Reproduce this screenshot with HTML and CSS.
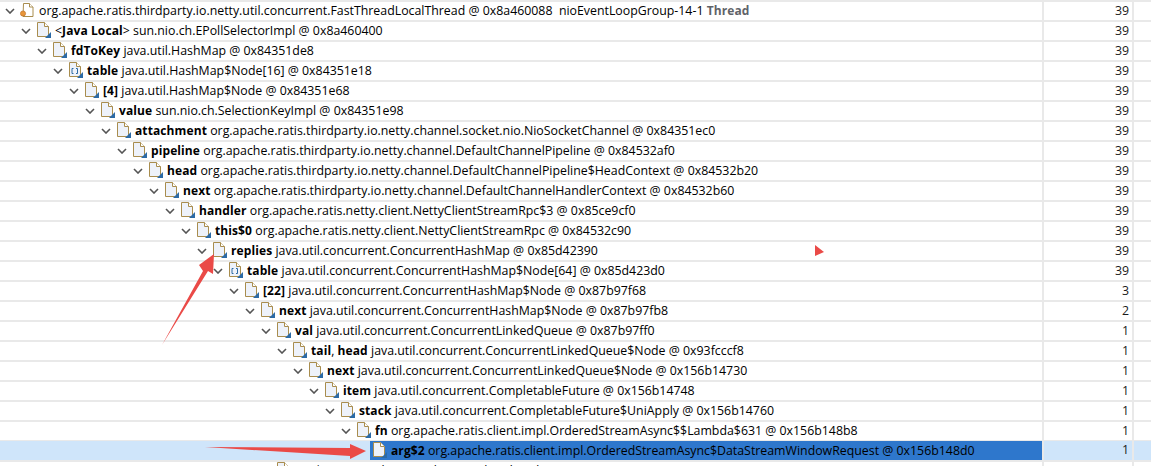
FILE: index.html
```html
<!DOCTYPE html>
<html lang="en">
<head>
<meta charset="utf-8">
<title>Heap object tree</title>
<link rel="stylesheet" href="styles.css">
</head>
<body>
<svg class="defs" width="0" height="0" aria-hidden="true">
  <symbol id="chev" viewBox="0 0 10 6"><path d="M1 1l4 4 4-4" fill="none" stroke="#555" stroke-width="1.6"/></symbol>
  <symbol id="doc" viewBox="0 0 16 16">
    <path d="M1.5 .5h7l4 4v10h-11z" fill="#eef2fa" stroke="#a98d4e"/>
    <path d="M8.500 .5v4h4" fill="#fff" stroke="#a98d4e"/>
    <path d="M15 10v6h-6z" fill="#2c6aa6"/>
  </symbol>
  <symbol id="arr" viewBox="0 0 16 16">
    <path d="M1.500 .5h7l4 4v10h-11z" fill="#eef2fa" stroke="#a98d4e"/>
    <path d="M8.500 .5v4h4" fill="#fff" stroke="#a98d4e"/>
    <path d="M5.500 6.500h-1.500v5h1.500M8 6.500h1.500v5h-1.500" fill="none" stroke="#2c6aa6"/>
    <path d="M15 10v6h-6z" fill="#2c6aa6"/>
  </symbol>
  <symbol id="thr" viewBox="0 0 16 16">
    <path d="M3.500 1.500h6l3.500 3.500v9.500h-10z" fill="#fff" stroke="#a98d4e"/>
    <path d="M9.500 1.500v3.500h3.500" fill="#fff" stroke="#a98d4e"/>
    <circle cx="3" cy="11.500" r="2.600" fill="#e9963a" stroke="#b96a1e" stroke-width=".6"/>
  </symbol>
</svg>
<main class="tree">
  <div class="row"><div class="name"><span class="ind d0"></span><svg class="chev"><use href="#chev"/></svg><svg class="ico"><use href="#thr"/></svg><span class="txt">org.apache.ratis.thirdparty.io.netty.util.concurrent.FastThreadLocalThread @ 0x8a460088 &nbsp;nioEventLoopGroup-14-1 <b class="muted">Thread</b></span></div><div class="num">39</div><div class="tail"></div></div>
  <div class="row"><div class="name"><span class="ind d1"></span><svg class="chev"><use href="#chev"/></svg><svg class="ico"><use href="#doc"/></svg><span class="txt">&lt;<b>Java Local</b>&gt; sun.nio.ch.EPollSelectorImpl @ 0x8a460400</span></div><div class="num">39</div><div class="tail"></div></div>
  <div class="row"><div class="name"><span class="ind d2"></span><svg class="chev"><use href="#chev"/></svg><svg class="ico"><use href="#doc"/></svg><span class="txt"><b>fdToKey</b> java.util.HashMap @ 0x84351de8</span></div><div class="num">39</div><div class="tail"></div></div>
  <div class="row"><div class="name"><span class="ind d3"></span><svg class="chev"><use href="#chev"/></svg><svg class="ico"><use href="#arr"/></svg><span class="txt"><b>table</b> java.util.HashMap$Node[16] @ 0x84351e18</span></div><div class="num">39</div><div class="tail"></div></div>
  <div class="row"><div class="name"><span class="ind d4"></span><svg class="chev"><use href="#chev"/></svg><svg class="ico"><use href="#doc"/></svg><span class="txt"><b>[4]</b> java.util.HashMap$Node @ 0x84351e68</span></div><div class="num">39</div><div class="tail"></div></div>
  <div class="row"><div class="name"><span class="ind d5"></span><svg class="chev"><use href="#chev"/></svg><svg class="ico"><use href="#doc"/></svg><span class="txt"><b>value</b> sun.nio.ch.SelectionKeyImpl @ 0x84351e98</span></div><div class="num">39</div><div class="tail"></div></div>
  <div class="row"><div class="name"><span class="ind d6"></span><svg class="chev"><use href="#chev"/></svg><svg class="ico"><use href="#doc"/></svg><span class="txt"><b>attachment</b> org.apache.ratis.thirdparty.io.netty.channel.socket.nio.NioSocketChannel @ 0x84351ec0</span></div><div class="num">39</div><div class="tail"></div></div>
  <div class="row"><div class="name"><span class="ind d7"></span><svg class="chev"><use href="#chev"/></svg><svg class="ico"><use href="#doc"/></svg><span class="txt"><b>pipeline</b> org.apache.ratis.thirdparty.io.netty.channel.DefaultChannelPipeline @ 0x84532af0</span></div><div class="num">39</div><div class="tail"></div></div>
  <div class="row"><div class="name"><span class="ind d8"></span><svg class="chev"><use href="#chev"/></svg><svg class="ico"><use href="#doc"/></svg><span class="txt"><b>head</b> org.apache.ratis.thirdparty.io.netty.channel.DefaultChannelPipeline$HeadContext @ 0x84532b20</span></div><div class="num">39</div><div class="tail"></div></div>
  <div class="row"><div class="name"><span class="ind d9"></span><svg class="chev"><use href="#chev"/></svg><svg class="ico"><use href="#doc"/></svg><span class="txt"><b>next</b> org.apache.ratis.thirdparty.io.netty.channel.DefaultChannelHandlerContext @ 0x84532b60</span></div><div class="num">39</div><div class="tail"></div></div>
  <div class="row"><div class="name"><span class="ind d10"></span><svg class="chev"><use href="#chev"/></svg><svg class="ico"><use href="#doc"/></svg><span class="txt"><b>handler</b> org.apache.ratis.netty.client.NettyClientStreamRpc$3 @ 0x85ce9cf0</span></div><div class="num">39</div><div class="tail"></div></div>
  <div class="row"><div class="name"><span class="ind d11"></span><svg class="chev"><use href="#chev"/></svg><svg class="ico"><use href="#doc"/></svg><span class="txt"><b>this$0</b> org.apache.ratis.netty.client.NettyClientStreamRpc @ 0x84532c90</span></div><div class="num">39</div><div class="tail"></div></div>
  <div class="row"><div class="name"><span class="ind d12"></span><svg class="chev"><use href="#chev"/></svg><svg class="ico"><use href="#doc"/></svg><span class="txt"><b>replies</b> java.util.concurrent.ConcurrentHashMap @ 0x85d42390</span></div><div class="num">39</div><div class="tail"></div></div>
  <div class="row"><div class="name"><span class="ind d13"></span><svg class="chev"><use href="#chev"/></svg><svg class="ico"><use href="#arr"/></svg><span class="txt"><b>table</b> java.util.concurrent.ConcurrentHashMap$Node[64] @ 0x85d423d0</span></div><div class="num">39</div><div class="tail"></div></div>
  <div class="row"><div class="name"><span class="ind d14"></span><svg class="chev"><use href="#chev"/></svg><svg class="ico"><use href="#doc"/></svg><span class="txt"><b>[22]</b> java.util.concurrent.ConcurrentHashMap$Node @ 0x87b97f68</span></div><div class="num">3</div><div class="tail"></div></div>
  <div class="row"><div class="name"><span class="ind d15"></span><svg class="chev"><use href="#chev"/></svg><svg class="ico"><use href="#doc"/></svg><span class="txt"><b>next</b> java.util.concurrent.ConcurrentHashMap$Node @ 0x87b97fb8</span></div><div class="num">2</div><div class="tail"></div></div>
  <div class="row"><div class="name"><span class="ind d16"></span><svg class="chev"><use href="#chev"/></svg><svg class="ico"><use href="#doc"/></svg><span class="txt"><b>val</b> java.util.concurrent.ConcurrentLinkedQueue @ 0x87b97ff0</span></div><div class="num">1</div><div class="tail"></div></div>
  <div class="row"><div class="name"><span class="ind d17"></span><svg class="chev"><use href="#chev"/></svg><svg class="ico"><use href="#doc"/></svg><span class="txt"><b>tail</b>, <b>head</b> java.util.concurrent.ConcurrentLinkedQueue$Node @ 0x93fcccf8</span></div><div class="num">1</div><div class="tail"></div></div>
  <div class="row"><div class="name"><span class="ind d18"></span><svg class="chev"><use href="#chev"/></svg><svg class="ico"><use href="#doc"/></svg><span class="txt"><b>next</b> java.util.concurrent.ConcurrentLinkedQueue$Node @ 0x156b14730</span></div><div class="num">1</div><div class="tail"></div></div>
  <div class="row"><div class="name"><span class="ind d19"></span><svg class="chev"><use href="#chev"/></svg><svg class="ico"><use href="#doc"/></svg><span class="txt"><b>item</b> java.util.concurrent.CompletableFuture @ 0x156b14748</span></div><div class="num">1</div><div class="tail"></div></div>
  <div class="row"><div class="name"><span class="ind d20"></span><svg class="chev"><use href="#chev"/></svg><svg class="ico"><use href="#doc"/></svg><span class="txt"><b>stack</b> java.util.concurrent.CompletableFuture$UniApply @ 0x156b14760</span></div><div class="num">1</div><div class="tail"></div></div>
  <div class="row"><div class="name"><span class="ind d21"></span><svg class="chev"><use href="#chev"/></svg><svg class="ico"><use href="#doc"/></svg><span class="txt"><b>fn</b> org.apache.ratis.client.impl.OrderedStreamAsync$$Lambda$631 @ 0x156b148b8</span></div><div class="num">1</div><div class="tail"></div></div>
  <div class="row sel"><div class="name"><span class="ind d22"></span><span class="nochev sel-gap"></span><span class="hl"><svg class="ico"><use href="#doc"/></svg><span class="txt"><b>arg$2</b> org.apache.ratis.client.impl.OrderedStreamAsync$DataStreamWindowRequest @ 0x156b148d0</span></span></div><div class="num">1</div><div class="tail"></div></div>
  <div class="row"><div class="name"><span class="ind d16"></span><span class="nochev"></span><svg class="ico"><use href="#doc"/></svg><span class="txt"><b>arg$1</b> org.apache.ratis.client.impl.OrderedStreamAsync</span></div><div class="num">1</div><div class="tail"></div></div>
</main>
<svg class="marks" width="1151" height="466" viewBox="0 0 1151 466" aria-hidden="true">
  <path d="M162 345L203 271 199 265 214 254 213 274 208 271z" fill="#ea4a47"/>
  <path d="M205 447L350 448 350 444 366 451 350 459 350 456z" fill="#ea4a47"/>
  <path d="M815 245L824 252 815 256z" fill="#ea4a47"/>
</svg>
</body>
</html>
```
FILE: styles.css
```css
* { box-sizing: border-box; }
html, body { margin: 0; height: 466px; overflow: hidden; background: #fff; }
body { position: relative; font: 12.35px/17px "Open Sans", "Noto Sans", sans-serif; color: #000; }
.defs { position: absolute; }
.marks { position: absolute; left: 0; top: 0; pointer-events: none; }
.tree { display: flex; flex-direction: column; border-top: 2px solid #e9e9e9; }
.row { display: flex; flex: none; height: 20px; border-bottom: 2px solid #e9e9e9; }
.row.sel { background: #cfe5fa; height: 21px; margin-top: -1px; }
.name { flex: none; width: 1042px; display: flex; align-items: flex-start; white-space: nowrap; overflow: hidden; }
.num { flex: none; width: 92px; padding-right: 3px; border-left: 2px solid #e9e9e9; border-right: 2px solid #e9e9e9; text-align: right; color: #1a1a1a; }
.tail { flex: 1; }
.chev { flex: none; width: 10px; height: 6px; margin: 6px 5px 0 0; }
.nochev { flex: none; width: 15px; }
.nochev.sel-gap { width: 13px; }
.ico { flex: none; width: 16px; height: 16px; margin-right: 3px; overflow: visible; }
.txt { flex: none; }
.txt b { font-weight: 700; font-size: 12px; letter-spacing: .1px; }
.muted { color: #5f6368; }
.hl { flex: 1; display: flex; align-items: flex-start; align-self: stretch; background: #2e77cc; padding: 1px 0 0 2px; }
.ind { flex: none; }
.d0 { width: 5px; } .d1 { width: 21px; } .d2 { width: 37px; } .d3 { width: 53px; }
.d4 { width: 69px; } .d5 { width: 85px; } .d6 { width: 101px; } .d7 { width: 117px; }
.d8 { width: 133px; } .d9 { width: 149px; } .d10 { width: 165px; } .d11 { width: 181px; }
.d12 { width: 197px; } .d13 { width: 213px; } .d14 { width: 229px; } .d15 { width: 245px; }
.d16 { width: 261px; } .d17 { width: 277px; } .d18 { width: 293px; } .d19 { width: 309px; }
.d20 { width: 325px; } .d21 { width: 341px; } .d22 { width: 357px; }
```
